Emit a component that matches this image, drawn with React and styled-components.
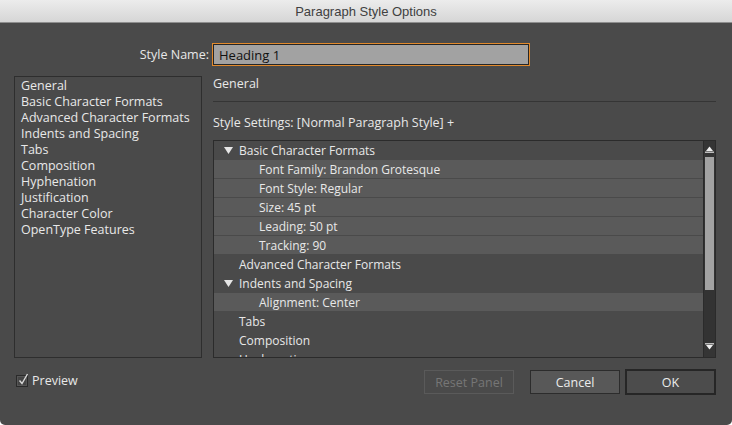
import styled, { createGlobalStyle } from "styled-components";

const GlobalStyle = createGlobalStyle`
  html, body {
    margin: 0;
    padding: 0;
    background: #ffffff;
  }
  * {
    box-sizing: border-box;
  }
`;

const categories = [
  "General",
  "Basic Character Formats",
  "Advanced Character Formats",
  "Indents and Spacing",
  "Tabs",
  "Composition",
  "Hyphenation",
  "Justification",
  "Character Color",
  "OpenType Features",
];

const settings = [
  { label: "Basic Character Formats", open: true },
  { label: "Font Family: Brandon Grotesque", child: true },
  { label: "Font Style: Regular", child: true },
  { label: "Size: 45 pt", child: true },
  { label: "Leading: 50 pt", child: true },
  { label: "Tracking: 90", child: true },
  { label: "Advanced Character Formats" },
  { label: "Indents and Spacing", open: true },
  { label: "Alignment: Center", child: true },
  { label: "Tabs" },
  { label: "Composition" },
  { label: "Hyphenation" },
];

function Disclosure() {
  return (
    <svg width="9" height="7" viewBox="0 0 9 7">
      <polygon points="0,0 9,0 4.5,7" fill="#e6e6e6" />
    </svg>
  );
}

function ScrollArrow({ down }) {
  return (
    <svg width="9" height="7" viewBox="0 0 9 7">
      {down ? (
        <>
          <rect x="0" y="0" width="9" height="1.5" fill="#bdbdbd" />
          <polygon points="1,2 8,2 4.5,6.5" fill="#f0f0f0" />
        </>
      ) : (
        <>
          <polygon points="4.5,0.5 8,5 1,5" fill="#f0f0f0" />
          <rect x="0" y="5.5" width="9" height="1.5" fill="#bdbdbd" />
        </>
      )}
    </svg>
  );
}

export default function App() {
  return (
    <>
      <GlobalStyle />
      <Window>
        <TitleBar>Paragraph Style Options</TitleBar>
        <Body>
          <NameRow>
            <NameLabel>Style Name:</NameLabel>
            <NameInput defaultValue="Heading 1" />
          </NameRow>

          <Main>
            <CategoryList>
              {categories.map((c) => (
                <Category key={c}>{c}</Category>
              ))}
            </CategoryList>

            <Panel>
              <PanelTitle>General</PanelTitle>
              <Divider />
              <SettingsLabel>
                Style Settings: [Normal Paragraph Style] +
              </SettingsLabel>
              <Tree>
                <Rows>
                  {settings.map((s) => (
                    <Row key={s.label} child={s.child}>
                      <Toggle>{s.open && <Disclosure />}</Toggle>
                      <RowText child={s.child}>{s.label}</RowText>
                    </Row>
                  ))}
                </Rows>
                <Scrollbar>
                  <ArrowButton>
                    <ScrollArrow />
                  </ArrowButton>
                  <Thumb />
                  <Track />
                  <ArrowButton down>
                    <ScrollArrow down />
                  </ArrowButton>
                </Scrollbar>
              </Tree>
            </Panel>
          </Main>

          <Footer>
            <Preview>
              <CheckBox>
                <svg width="12" height="13" viewBox="0 0 12 13">
                  <path
                    d="M2.5 7.5 L5 10.5 L10.5 1"
                    fill="none"
                    stroke="#d8d8d8"
                    strokeWidth="1.4"
                  />
                </svg>
              </CheckBox>
              Preview
            </Preview>
            <Buttons>
              <Button disabled>Reset Panel</Button>
              <Button>Cancel</Button>
              <Button primary>OK</Button>
            </Buttons>
          </Footer>
        </Body>
      </Window>
    </>
  );
}

const uiFont = `"Open Sans", "Liberation Sans", sans-serif`;

const Window = styled.div`
  width: 732px;
  height: 425px;
  display: flex;
  flex-direction: column;
  background: #4a4a4a;
  border-radius: 0 0 5px 5px;
  overflow: hidden;
  font-family: ${uiFont};
  font-size: 12px;
  color: #e8e8e8;
`;

const TitleBar = styled.div`
  height: 23px;
  flex: none;
  display: flex;
  align-items: center;
  justify-content: center;
  background: linear-gradient(#ececec, #d6d6d6);
  border-bottom: 1px solid #8e8e8e;
  font-family: "Liberation Sans", Arial, sans-serif;
  font-size: 13px;
  color: #404040;
`;

const Body = styled.div`
  flex: 1;
  display: flex;
  flex-direction: column;
  padding: 21px 16px 0 14px;
`;

const NameRow = styled.div`
  display: flex;
  align-items: center;
  gap: 4px;
  height: 21px;
`;

const NameLabel = styled.div`
  width: 195px;
  text-align: right;
  font-size: 12.5px;
`;

const NameInput = styled.input`
  width: 316px;
  height: 21px;
  border: 1px solid #262626;
  outline: none;
  box-shadow: 0 0 0 1px #e28a2c;
  background: #a2a2a2;
  color: #111;
  font-family: ${uiFont};
  font-size: 13px;
  padding: 0 5px;
`;

const Main = styled.div`
  display: grid;
  grid-template-columns: 188px 503px;
  column-gap: 11px;
  height: 282px;
  margin-top: 11px;
`;

const CategoryList = styled.div`
  border: 1px solid #2e2e2e;
  padding: 1px 6px;
`;

const Category = styled.div`
  height: 16px;
  line-height: 16px;
  font-size: 12.5px;
  white-space: nowrap;
`;

const Panel = styled.div`
  display: flex;
  flex-direction: column;
  min-height: 0;
`;

const PanelTitle = styled.div`
  height: 16px;
  line-height: 16px;
  font-size: 12.5px;
`;

const Divider = styled.div`
  height: 1px;
  background: #353535;
  margin: 9px 0 13px;
`;

const SettingsLabel = styled.div`
  height: 16px;
  line-height: 16px;
  font-size: 12.5px;
`;

const Tree = styled.div`
  margin-top: 9px;
  flex: 1;
  min-height: 0;
  display: flex;
  border: 1px solid #2b2b2b;
  background: #4a4a4a;
  overflow: hidden;
`;

const Rows = styled.div`
  flex: 1;
  overflow: hidden;
`;

const Row = styled.div`
  height: 19px;
  display: flex;
  align-items: center;
  background: ${(p) => (p.child ? "#5a5a5a" : "#4a4a4a")};
  border-bottom: 1px solid #4a4a4a;
`;

const Toggle = styled.div`
  width: 25px;
  display: flex;
  justify-content: center;
  padding-left: 4px;
`;

const RowText = styled.div`
  padding-left: ${(p) => (p.child ? "20px" : "0")};
  white-space: nowrap;
`;

const Scrollbar = styled.div`
  width: 12px;
  display: flex;
  flex-direction: column;
  background: #333333;
  border-left: 1px solid #2b2b2b;
`;

const ArrowButton = styled.div`
  height: ${(p) => (p.down ? "14px" : "16px")};
  display: flex;
  align-items: ${(p) => (p.down ? "flex-start" : "center")};
  justify-content: center;
  background: #353535;
`;

const Thumb = styled.div`
  height: 133px;
  margin: 0 1px;
  background: #a3a3a3;
`;

const Track = styled.div`
  flex: 1;
`;

const Footer = styled.div`
  display: flex;
  align-items: center;
  justify-content: space-between;
  margin-top: 12px;
  padding-left: 2px;
`;

const Preview = styled.label`
  display: flex;
  align-items: center;
  gap: 4px;
  font-size: 12.5px;
  margin-top: -4px;
`;

const CheckBox = styled.span`
  width: 12px;
  height: 12px;
  border: 1px solid #2a2a2a;
  background: #444444;
  box-shadow: inset 0 0 0 1px #555555;
  display: flex;
  align-items: center;
  justify-content: center;
  position: relative;

  svg {
    position: absolute;
    left: 0;
    top: -3px;
  }
`;

const Buttons = styled.div`
  display: flex;
  gap: 0;
`;

const Button = styled.button`
  height: ${(p) => (p.primary ? "26px" : "24px")};
  width: ${(p) => (p.primary ? "91px" : "90px")};
  margin-left: ${(p) => (p.primary ? "5px" : p.disabled ? "0" : "16px")};
  margin-top: ${(p) => (p.primary ? "-1px" : "0")};
  font-family: ${uiFont};
  font-size: 12.5px;
  border-radius: 0;
  color: ${(p) => (p.disabled ? "#767676" : "#ececec")};
  background: ${(p) =>
    p.disabled ? "#4a4a4a" : p.primary ? "#4c4c4c" : "#585858"};
  border: ${(p) =>
    p.disabled
      ? "1px solid #5a5a5a"
      : p.primary
      ? "2px solid #262626"
      : "1px solid #2c2c2c"};
  padding: 0;
`;
